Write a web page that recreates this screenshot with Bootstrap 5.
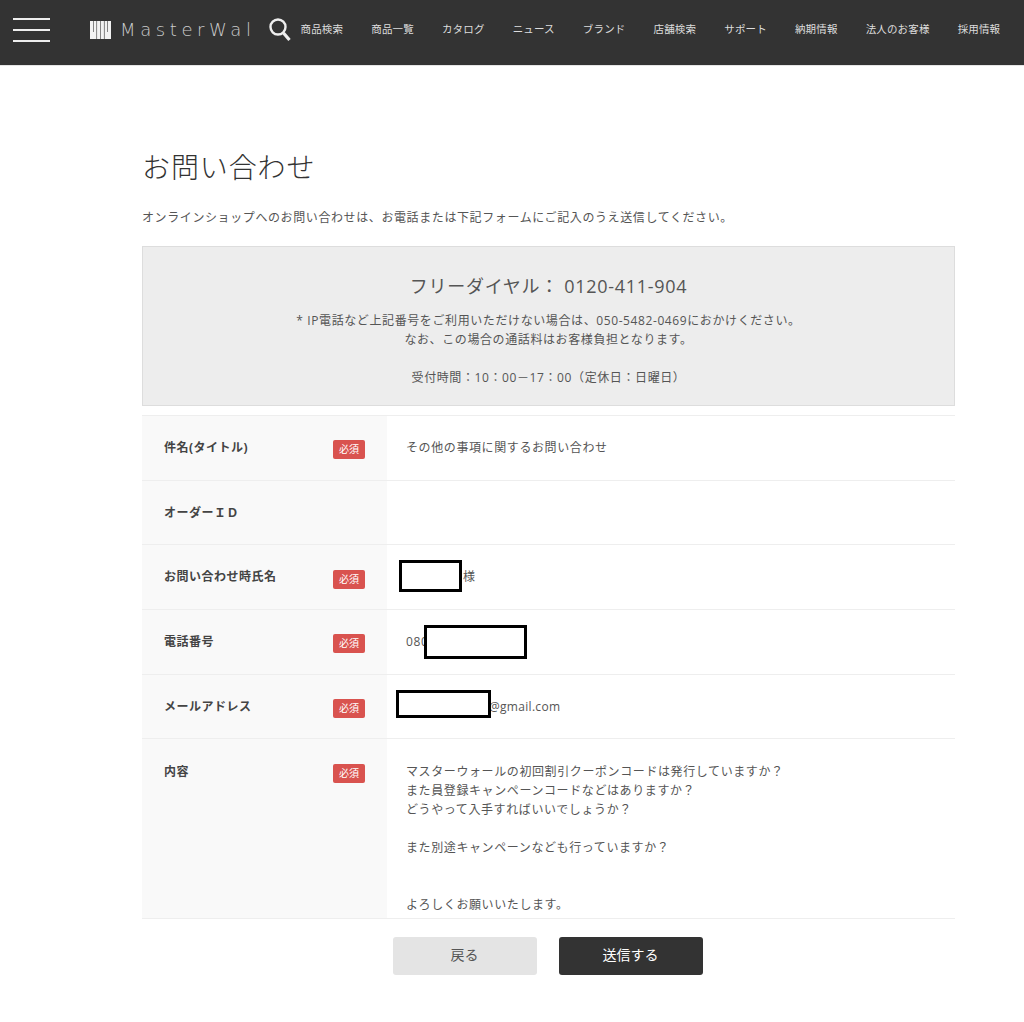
<!DOCTYPE html>
<html lang="ja"><head><meta charset="utf-8"><title>お問い合わせ</title>
<link href="https://cdn.jsdelivr.net/npm/bootstrap@5.3.0/dist/css/bootstrap.min.css" rel="stylesheet">
<style>
body{font-family:"Open Sans","Noto Sans CJK JP",sans-serif;color:#555;background:#fff;font-size:12px;font-weight:400;letter-spacing:.6px}
.mw-head{height:66px;background:#333;border-bottom:1px solid #e5e5e5;padding:0 0 6px 13px;letter-spacing:0}
.burger{width:37px;gap:9px;margin-right:39px;flex:none}
.burger i{display:block;height:2px;background:#eee}
.mw-logo{color:#ccc;font-family:"DejaVu Sans",sans-serif;font-size:18px;letter-spacing:4.6px;font-weight:200;white-space:nowrap;margin-right:12px;gap:8px;flex:none}
.mw-head>svg{flex:none}
.mw-nav{gap:28.1px;color:#ddd;font-size:10.5px;font-weight:400;letter-spacing:.15px;white-space:nowrap;margin-left:9px;flex:none}
.mw-main{width:813px;margin:0 0 0 142px;padding-top:83px}
.mw-title{font-size:28px;font-weight:300;letter-spacing:.9px;line-height:36px;margin:0 0 24px;color:#333}
.mw-lead{font-size:12px;line-height:18px;margin:0 0 19px}
.mw-info{background:#ededed;border:1px solid #ddd;height:160px;padding-top:25px;line-height:19px;font-size:12px}
.mw-tel{font-size:18px;letter-spacing:.7px;line-height:28px;margin-bottom:11px}
.mw-hours{margin-top:19px}
.mw-table{margin-top:9px;border-top:1px solid #eee}
.mw-row{border-bottom:1px solid #eee;height:64.7px}
.mw-row-tall{height:179.5px}
.mw-th{width:245px;flex:none;background:#f9f9f9;padding:0 22px;font-weight:700;font-size:12px;letter-spacing:.5px;color:#444}
.mw-row-tall .mw-th{padding-top:24px}
.mw-td{padding:0 19px;position:relative}
.mw-row-tall .mw-td{padding-top:23px;line-height:19px}
.mw-req{background:#d9534f;color:#fff;font-size:10px;font-weight:400;letter-spacing:0;width:32px;height:19px;border-radius:2px;margin-top:4px}
.mw-row-tall .mw-req{margin-top:1px}
.mask{position:absolute;background:#fff;border:3px solid #000}
.mask-name{left:12px;top:15px;width:63px;height:32px}
.mask-tel{left:37px;top:15px;width:103px;height:34px}
.mask-mail{left:9px;top:15px;width:95px;height:28px}
.after-name{margin-left:57px}
.after-mail{margin-left:83px;letter-spacing:.3px}
.mw-btn{width:144px;height:38px;font-size:14px;line-height:1;padding:0 0 2px;border-radius:3px;border:0;font-weight:400}
.mw-back{background:#e4e4e4;color:#555}
.mw-send{background:#333;color:#fff}
.mw-foot{gap:22px;margin-top:18px;padding-right:2px}
</style></head><body>
<header class="mw-head d-flex align-items-center">
<div class="burger d-flex flex-column"><i></i><i></i><i></i></div>
<div class="mw-logo d-flex align-items-center">
<svg width="23" height="19" viewBox="0 0 23 19"><path fill="#f2f2f2" d="M1 1h21v18H1z"/><path stroke="#666" stroke-width=".8" fill="none" d="M4.5 1v11M7.6 1v18M11.5 1v18M15.4 1v18M18.5 1v11"/></svg>
<span>MasterWal</span></div>
<svg width="24" height="26" viewBox="0 0 24 26" fill="none" stroke="#eee"><circle cx="10" cy="10" r="7.5" stroke-width="2.4"/><path d="M15.5 16l6 7" stroke-width="3.2"/></svg>
<nav class="mw-nav d-flex"><span>商品検索</span><span>商品一覧</span><span>カタログ</span><span>ニュース</span><span>ブランド</span><span>店舗検索</span><span>サポート</span><span>納期情報</span><span>法人のお客様</span><span>採用情報</span></nav>
</header>
<main class="mw-main">
<h1 class="mw-title">お問い合わせ</h1>
<p class="mw-lead">オンラインショップへのお問い合わせは、お電話または下記フォームにご記入のうえ送信してください。</p>
<section class="mw-info text-center">
<div class="mw-tel">フリーダイヤル： 0120-411-904</div>
<div>* IP電話など上記番号をご利用いただけない場合は、050-5482-0469におかけください。</div>
<div>なお、この場合の通話料はお客様負担となります。</div>
<div class="mw-hours">受付時間：10：00－17：00（定休日：日曜日）</div>
</section>
<section class="mw-table">
<div class="mw-row d-flex"><div class="mw-th d-flex align-items-center justify-content-between"><span>件名(タイトル)</span><span class="mw-req d-flex align-items-center justify-content-center">必須</span></div><div class="mw-td d-flex align-items-center">その他の事項に関するお問い合わせ</div></div>
<div class="mw-row d-flex"><div class="mw-th d-flex align-items-center"><span>オーダーＩＤ</span></div><div class="mw-td"></div></div>
<div class="mw-row d-flex"><div class="mw-th d-flex align-items-center justify-content-between"><span>お問い合わせ時氏名</span><span class="mw-req d-flex align-items-center justify-content-center">必須</span></div><div class="mw-td flex-grow-1 d-flex align-items-center"><span class="mask mask-name"></span><span class="after-name">様</span></div></div>
<div class="mw-row d-flex"><div class="mw-th d-flex align-items-center justify-content-between"><span>電話番号</span><span class="mw-req d-flex align-items-center justify-content-center">必須</span></div><div class="mw-td flex-grow-1 d-flex align-items-center">080<span class="mask mask-tel"></span></div></div>
<div class="mw-row d-flex"><div class="mw-th d-flex align-items-center justify-content-between"><span>メールアドレス</span><span class="mw-req d-flex align-items-center justify-content-center">必須</span></div><div class="mw-td flex-grow-1 d-flex align-items-center"><span class="mask mask-mail"></span><span class="after-mail">@gmail.com</span></div></div>
<div class="mw-row mw-row-tall d-flex"><div class="mw-th d-flex align-items-start justify-content-between"><span>内容</span><span class="mw-req d-flex align-items-center justify-content-center">必須</span></div><div class="mw-td">マスターウォールの初回割引クーポンコードは発行していますか？<br>また員登録キャンペーンコードなどはありますか？<br>どうやって入手すればいいでしょうか？<br><br>また別途キャンペーンなども行っていますか？<br><br><br>よろしくお願いいたします。</div></div>
</section>
<div class="mw-foot d-flex justify-content-center"><button class="mw-btn mw-back">戻る</button><button class="mw-btn mw-send">送信する</button></div>
</main>
<script src="https://cdn.jsdelivr.net/npm/bootstrap@5.3.0/dist/js/bootstrap.bundle.min.js"></script>
</body></html>
